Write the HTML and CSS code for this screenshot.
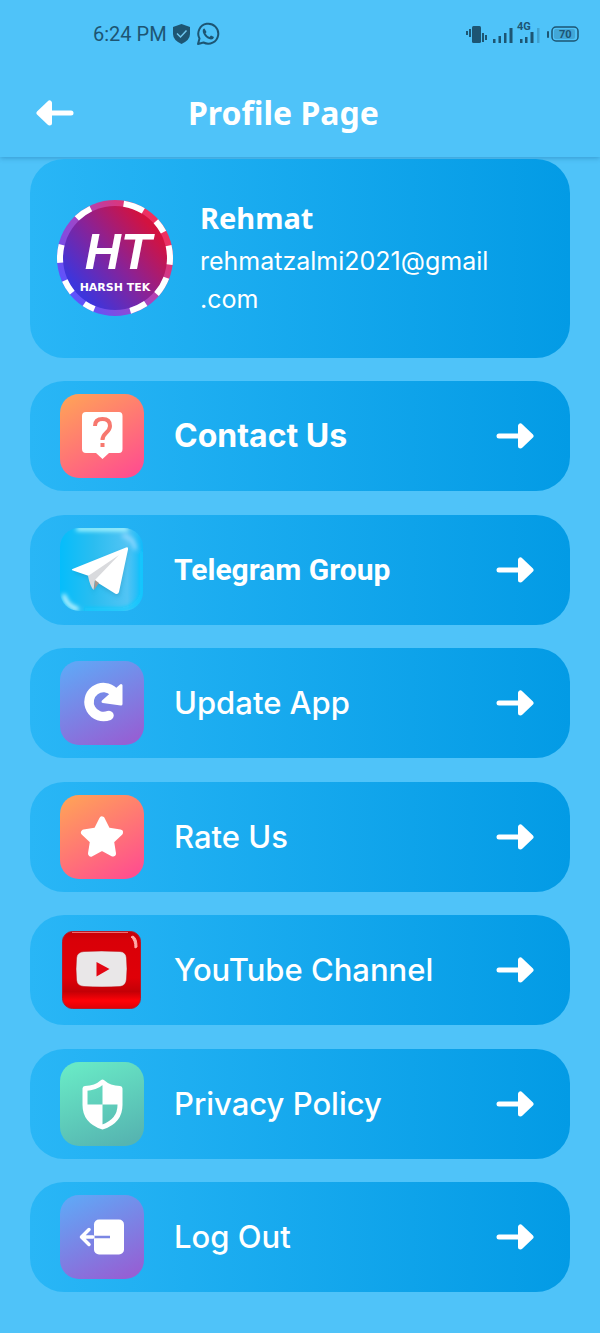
FILE: index.html
```html
<!DOCTYPE html>
<html lang="en">
<head>
<meta charset="utf-8">
<meta name="viewport" content="width=device-width, initial-scale=1">
<title>Profile Page</title>
<link rel="stylesheet" href="styles.css">
</head>
<body>
<svg class="defs" aria-hidden="true">
  <defs>
    <symbol id="arrow" viewBox="0 0 38 26">
      <path d="M3 13H25" fill="none" stroke="#fff" stroke-width="5" stroke-linecap="round"/>
      <path d="M24.500 3V23L35 13Z" fill="#fff" stroke="#fff" stroke-width="5" stroke-linejoin="round"/>
    </symbol>
  </defs>
</svg>
<header class="top">
  <div class="status">
    <div class="status-left">
      <span>6:24 PM</span>
      <svg width="19" height="22" viewBox="0 0 19 22"><path d="M9.500 1L18 4V11Q18 17 9.500 21Q1 17 1 11V4Z" fill="#1d5573"/><path d="M5 10.500L8.500 14L14.500 7.500" fill="none" stroke="#6fc6ee" stroke-width="1.500"/></svg>
      <svg class="chat" width="24" height="24" viewBox="0 0 24 24"><path d="M2 22L3.500 16.500A10 10 0 1 1 7.500 20.500Z" fill="none" stroke="#1d5573" stroke-width="2" stroke-linejoin="round"/><path d="M8.500 6.500L10.500 10L9.500 11.500Q11 14 13.500 15L15 13.500L18 15Q17.500 17.500 15 17.500Q11 17 8.500 13.500Q6 10 7 7.500Q7.500 6.500 8.500 6.500Z" fill="#1d5573"/></svg>
    </div>
    <div class="status-right">
      <svg width="116" height="28" viewBox="0 0 116 28" fill="#1d5573">
        <rect x="6" y="6" width="9" height="17" rx="1.500"/>
        <path d="M3 9H5V17H3ZM0 11H2V15H0ZM16 13H18V22H16ZM19 15H21V20H19Z"/>
        <path d="M27 19H29.500V23H27ZM32.500 16H35V23H32.500ZM38 13H40.500V23H38ZM43.500 8H46.500V23H43.500Z"/>
        <text x="51" y="10" class="tiny">4G</text>
        <path d="M54 19H56.500V23H54ZM59 17H61.500V23H59ZM64.500 12H67.500V23H64.500Z"/>
        <path d="M71 8H73.500V23H71Z" opacity=".3"/>
        <rect x="81" y="11" width="2" height="7" rx="1"/>
        <rect x="86" y="7" width="26" height="14" rx="4" fill="none" stroke="#1d5573" stroke-width="1.500"/>
        <rect x="88" y="9" width="21" height="10" rx="2" opacity=".25"/>
        <text x="93" y="18" class="tiny">70</text>
      </svg>
    </div>
  </div>
  <div class="appbar">
    <button class="back" type="button" aria-label="Back"><svg class="arrow flip"><use href="#arrow"/></svg></button>
    <h1>Profile Page</h1>
  </div>
</header>
<main class="content">
  <section class="card profile">
    <svg class="avatar" viewBox="0 0 118 118" role="img" aria-label="Harsh Tek">
      <defs>
        <linearGradient id="disc" x1=".15" y1=".8" x2=".85" y2=".2"><stop offset="0" stop-color="#3d35dc"/><stop offset=".5" stop-color="#8a2296"/><stop offset="1" stop-color="#d3123f"/></linearGradient>
        <linearGradient id="ring" x1=".1" y1=".8" x2=".9" y2=".2"><stop offset="0" stop-color="#5b54ff"/><stop offset=".5" stop-color="#a944c0"/><stop offset="1" stop-color="#f52f58"/></linearGradient>
      </defs>
      <circle cx="59" cy="59" r="58" fill="url(#ring)"/>
      <circle cx="59" cy="59" r="52" fill="url(#disc)"/>
      <g fill="none" stroke="#fff" stroke-width="6">
        <circle cx="59" cy="59" r="55" pathLength="360" stroke-dasharray="18 342" transform="rotate(-134 59 59)"/>
        <circle cx="59" cy="59" r="55" pathLength="360" stroke-dasharray="22 338" transform="rotate(-81 59 59)"/>
        <circle cx="59" cy="59" r="55" pathLength="360" stroke-dasharray="14 346" transform="rotate(-42 59 59)"/>
        <circle cx="59" cy="59" r="55" pathLength="360" stroke-dasharray="20 340" transform="rotate(-13 59 59)"/>
        <circle cx="59" cy="59" r="55" pathLength="360" stroke-dasharray="20 340" transform="rotate(21 59 59)"/>
        <circle cx="59" cy="59" r="55" pathLength="360" stroke-dasharray="18 342" transform="rotate(56 59 59)"/>
        <circle cx="59" cy="59" r="55" pathLength="360" stroke-dasharray="12 348" transform="rotate(112 59 59)"/>
        <circle cx="59" cy="59" r="55" pathLength="360" stroke-dasharray="15 345" transform="rotate(141 59 59)"/>
        <circle cx="59" cy="59" r="55" pathLength="360" stroke-dasharray="19 341" transform="rotate(175 59 59)"/>
      </g>
      <text x="62" y="70" class="logo-big">HT</text>
      <text x="59" y="92" class="logo-small">HARSH TEK</text>
    </svg>
    <div class="who">
      <h2>Rehmat</h2>
      <p>rehmatzalmi2021@gmail<wbr>.com</p>
    </div>
  </section>

  <a class="card row" href="#contact">
    <svg class="icon" viewBox="0 0 84 84">
      <defs><linearGradient id="warm" x1=".2" y1="0" x2=".8" y2="1"><stop offset="0" stop-color="#ff9f5a"/><stop offset="1" stop-color="#ff4f8e"/></linearGradient></defs>
      <rect width="84" height="84" rx="19" fill="url(#warm)"/>
      <path d="M26 18H59Q62.500 18 62.500 22V55Q62.500 59 59 59H49L42.500 65L36 59H26Q22 59 22 55V22Q22 18 26 18Z" fill="#fff"/>
      <path d="M35 32Q35 25 42.500 25Q50 25 50 32Q50 35.500 46 39Q42.500 42 42.500 46" fill="none" stroke="#f7786f" stroke-width="4"/><rect x="40.500" y="49" width="4" height="4" fill="#f7786f"/>
    </svg>
    <span class="label strong">Contact Us</span><svg class="arrow"><use href="#arrow"/></svg>
  </a>

  <a class="card row" href="#telegram">
    <svg class="icon" viewBox="0 0 84 84">
      <defs>
        <linearGradient id="tg" x1="0" y1="0" x2="1" y2="0"><stop offset="0" stop-color="#05bdfb"/><stop offset=".4" stop-color="#2bbdf0"/><stop offset=".8" stop-color="#52c4f4"/><stop offset="1" stop-color="#0cb9fa"/></linearGradient>
        <filter id="soft" filterUnits="userSpaceOnUse" x="-10" y="-10" width="104" height="104"><feGaussianBlur stdDeviation="2"/></filter>
        <clipPath id="tgclip"><rect width="83" height="83" rx="19"/></clipPath>
      </defs>
      <g clip-path="url(#tgclip)">
        <rect width="84" height="84" fill="url(#tg)"/>
        <g fill="none" stroke-linecap="round" filter="url(#soft)">
          <path d="M18 1H66" stroke="#b5fbff" stroke-width="4"/>
          <path d="M64 8Q73 10 75 20" stroke="#8fd8ff" stroke-width="4"/>
          <path d="M4 68Q7 78 17 81" stroke="#d5faff" stroke-width="4"/>
          <path d="M26 82H60Q78 80 82 66V25" stroke="#10ccff" stroke-width="4"/>
        </g>
      </g>
      <path d="M13 44L68 21L59 69L36 56L34 65L30 50Z" fill="#137da5" opacity=".35" filter="url(#soft)"/>
      <path d="M12.500 41L66 19.500Q68.500 18.500 68 21.500L59 64Q58 67 55 65.500L35 53L29 48L13 42.500Q11 42 12.500 41Z" fill="#fff"/>
      <path d="M28 48L59 27L35 52L33.500 62Q30 58 28 48Z" fill="#d9dadd"/>
      <path d="M35 52L39 55L34 62Z" fill="#a8978f"/>
    </svg>
    <span class="label roboto">Telegram Group</span><svg class="arrow"><use href="#arrow"/></svg>
  </a>

  <a class="card row" href="#update">
    <svg class="icon" viewBox="0 0 84 84">
      <defs><linearGradient id="violet" x1=".25" y1="0" x2=".75" y2="1"><stop offset="0" stop-color="#62a5f5"/><stop offset="1" stop-color="#9560d4"/></linearGradient></defs>
      <rect width="84" height="84" rx="19" fill="url(#violet)"/>
      <path d="M54 31A14.500 14.500 0 1 0 49 54.500" fill="none" stroke="#fff" stroke-width="9.500" stroke-linecap="round"/>
      <path d="M61 24.500V43L43 40.500Z" fill="#fff" stroke="#fff" stroke-width="3" stroke-linejoin="round"/>
    </svg>
    <span class="label">Update App</span><svg class="arrow"><use href="#arrow"/></svg>
  </a>

  <a class="card row" href="#rate">
    <svg class="icon" viewBox="0 0 84 84">
      <rect width="84" height="84" rx="19" fill="url(#warm)"/>
      <path d="M42 24.500L47.500 35.500L60 37.500L51 46L53 58.500L42 52.500L31 58.500L33 46L24 37.500L36.500 35.500Z" fill="#fff" stroke="#fff" stroke-width="6" stroke-linejoin="round"/>
    </svg>
    <span class="label">Rate Us</span><svg class="arrow"><use href="#arrow"/></svg>
  </a>

  <a class="card row" href="#youtube">
    <svg class="icon" viewBox="0 0 84 84">
      <defs><linearGradient id="yt" x1="0" y1="0" x2="0" y2="1"><stop offset="0" stop-color="#c50008"/><stop offset=".12" stop-color="#d90008"/><stop offset=".6" stop-color="#df0008"/><stop offset=".78" stop-color="#c40006"/><stop offset=".9" stop-color="#ff0208"/><stop offset="1" stop-color="#e00008"/></linearGradient></defs>
      <rect x="2.500" y="3.500" width="78" height="77" rx="10" fill="url(#yt)" stroke="#b51a2a"/>
      <path d="M12 4.500H68" stroke="#f06b70" stroke-width="1"/>
      <path d="M73 8Q77 10 77 19L75 20Q75 12 71 9Z" fill="#ffaaa8" stroke="#ffaaa8" stroke-width="1"/>
      <path d="M24 23.500Q41 22.500 60 23.500Q66 24 66.500 30Q67.500 41 66.500 51Q66 58 60 58.500Q42 59.500 24 58.500Q17 58 16.500 52Q15.500 41 16.500 30Q17 24 24 23.500Z" fill="#e9e7e8" stroke="#b80008" stroke-width=".5"/>
      <path d="M36.500 34V48.500L49.500 41Z" fill="#e30613"/>
    </svg>
    <span class="label">YouTube Channel</span><svg class="arrow"><use href="#arrow"/></svg>
  </a>

  <a class="card row" href="#privacy">
    <svg class="icon" viewBox="0 0 84 84">
      <defs><linearGradient id="mint" x1=".3" y1="0" x2=".7" y2="1"><stop offset="0" stop-color="#68e8c5"/><stop offset="1" stop-color="#56b5b1"/></linearGradient></defs>
      <rect width="84" height="84" rx="19" fill="url(#mint)"/>
      <path d="M42.500 20Q49 26 60 26.500V43Q60 59 42.500 65Q25 59 25 43V26.500Q36 26 42.500 20Z" fill="none" stroke="#fff" stroke-width="5" stroke-linejoin="round"/>
      <path d="M42.500 21Q49 26 60 26.500V42.500H42.500V64Q25 58 25 42.500H42.500Z" fill="#fff"/>
    </svg>
    <span class="label">Privacy Policy</span><svg class="arrow"><use href="#arrow"/></svg>
  </a>

  <a class="card row" href="#logout">
    <svg class="icon" viewBox="0 0 84 84">
      <rect width="84" height="84" rx="19" fill="url(#violet)"/>
      <rect x="34" y="24.500" width="30" height="35" rx="5" fill="#fff"/>
      <path d="M34 42H50" stroke="#7b87e3" stroke-width="2.500"/>
      <path d="M33 42H22M29 34.500L21.500 42L29 49.500" fill="none" stroke="#fff" stroke-width="3.500" stroke-linecap="round" stroke-linejoin="round"/>
    </svg>
    <span class="label">Log Out</span><svg class="arrow"><use href="#arrow"/></svg>
  </a>
</main>
</body>
</html>
```
FILE: styles.css
```css
* { box-sizing: border-box; }
body {
  margin: 0;
  min-height: 100vh;
  display: flex;
  flex-direction: column;
  background: #4fc3f9;
  color: #fff;
  font-family: Inter, "Noto Sans", sans-serif;
}
h1, h2, p { margin: 0; }
.defs { position: absolute; width: 0; height: 0; }
.top { box-shadow: 0 1px 5px rgba(0, 60, 110, .3); }
.status {
  display: flex;
  justify-content: space-between;
  align-items: center;
  height: 68px;
  padding: 0 18px 0 93px;
  color: #1d5573;
  font: 400 20px/24px Roboto, sans-serif;
}
.status-left { display: flex; align-items: center; gap: 5px; }
.status-right { display: flex; }
.tiny { font: 700 11px Roboto, sans-serif; }
.appbar {
  display: flex;
  align-items: center;
  height: 89px;
  padding: 0 36px;
}
.back {
  display: flex;
  padding: 0;
  border: 0;
  background: none;
}
.arrow { display: block; flex: none; width: 38px; height: 26px; }
.flip { transform: scaleX(-1); }
h1 {
  margin-left: 114px;
  font: 700 32px/44px "Noto Sans", sans-serif;
}
.content {
  flex: 1;
  display: flex;
  flex-direction: column;
  justify-content: space-between;
  gap: 23px;
  padding: 2px 30px 41px;
}
.card {
  display: flex;
  align-items: center;
  border-radius: 34px;
  background: linear-gradient(90deg, #29b6f6, #039be5);
}
.profile {
  align-items: flex-start;
  min-height: 199px;
  padding: 40px 48px 40px 26px;
  gap: 26px;
}
.avatar { flex: none; width: 118px; height: 118px; }
.logo-big { font: italic 700 50px "Liberation Sans", sans-serif; fill: #fff; text-anchor: middle; }
.logo-small { font: 700 11px "DejaVu Sans", sans-serif; fill: #fff; text-anchor: middle; }
.who { min-width: 0; }
h2 { font: 700 29px/38px "Noto Sans", sans-serif; }
.who p { margin-top: 5px; font-size: 25px; line-height: 38px; }
.row {
  min-height: 110px;
  padding: 13px 36px 13px 30px;
  gap: 30px;
  color: #fff;
  text-decoration: none;
}
.icon { flex: none; width: 84px; height: 84px; }
.label {
  flex: 1;
  font-size: 31px;
  font-weight: 500;
  line-height: 44px;
}
.strong { font-size: 32px; font-weight: 700; }
.roboto { font-family: Roboto, sans-serif; font-size: 30px; font-weight: 700; }
```
